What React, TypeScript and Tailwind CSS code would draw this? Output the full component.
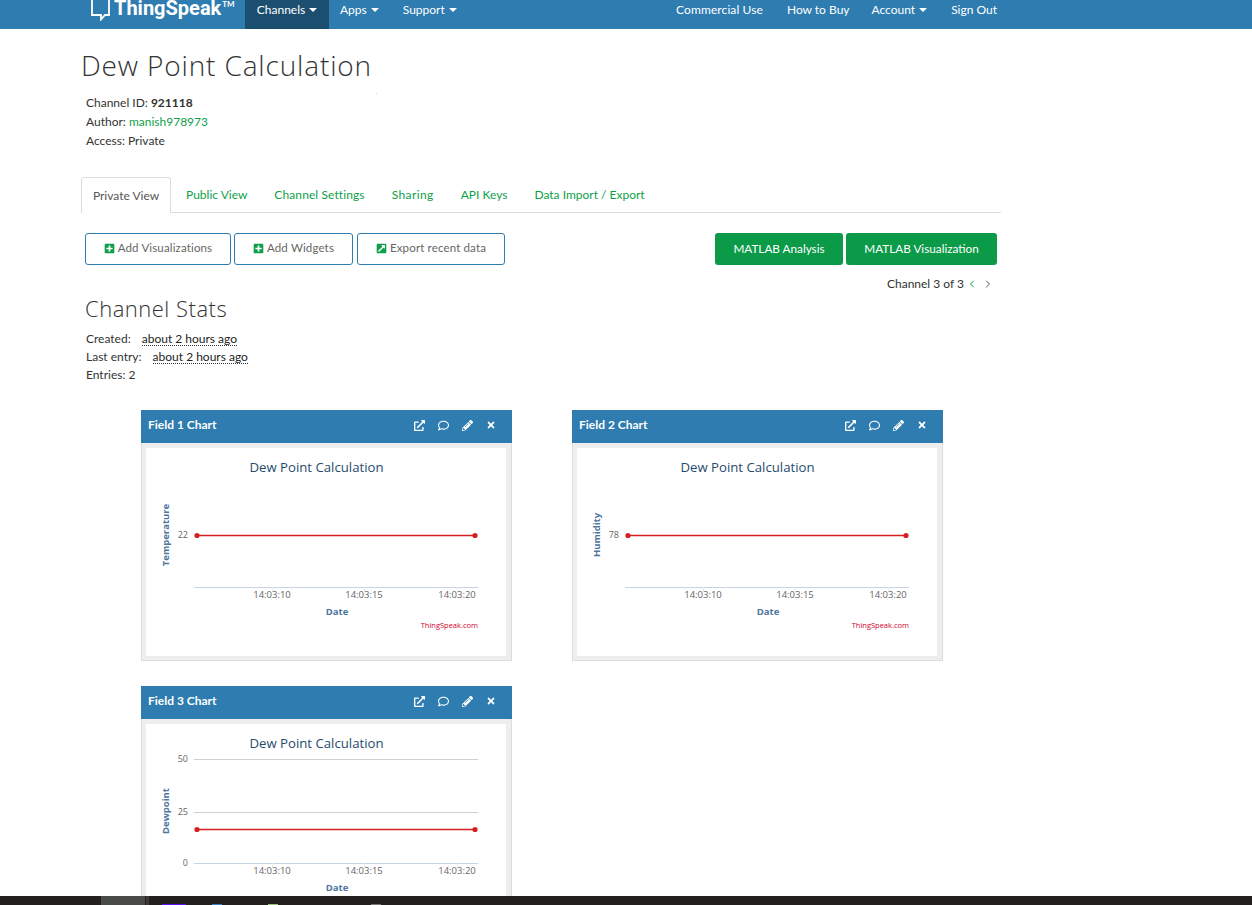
import { ChevronLeft, ChevronRight } from 'lucide-react'
import {
  FaExternalLinkAlt,
  FaExternalLinkSquareAlt,
  FaPencilAlt,
  FaPlusSquare,
  FaRegComment,
  FaTimes,
} from 'react-icons/fa'

type ChartProps = {
  title: string
  yLabel: string
  ticks: { label: string; y: number; grid?: boolean }[]
  lineY: number
}

const BODY = "font-['Lato',sans-serif]"

function Caret() {
  return <span className="ml-1 inline-block border-x-[4px] border-t-[4px] border-x-transparent border-t-white align-middle" />
}

function Chart({ yLabel, ticks, lineY }: Omit<ChartProps, 'title'>) {
  return (
    <svg width="360" height="208" className="block" fontFamily="'Open Sans', sans-serif">
      <text x="170.5" y="24" textAnchor="middle" fontSize="13.2" fill="#274b6d">Dew Point Calculation</text>
      {ticks.map((t) =>
        t.grid ? <line key={t.label} x1="48" x2="332" y1={t.y + 0.5} y2={t.y + 0.5} stroke="#d0d0d0" /> : null,
      )}
      <line x1="48" x2="332" y1="139.5" y2="139.5" stroke="#c8d4e2" />
      {[126, 218, 311].map((x) => (
        <line key={x} x1={x + 0.5} x2={x + 0.5} y1="139" y2="144" stroke="#e4eaf2" />
      ))}
      {ticks.map((t) => (
        <text key={t.label} x="42" y={t.y + 3} textAnchor="end" fontSize="9" fill="#666">{t.label}</text>
      ))}
      {['14:03:10', '14:03:15', '14:03:20'].map((l, i) => (
        <text key={l} x={[126, 218, 311][i]} y="150" textAnchor="middle" fontSize="9.5" fill="#666">{l}</text>
      ))}
      <text
        transform={`translate(23 87) rotate(-90)`}
        textAnchor="middle"
        fontSize="9.5"
        fontWeight="700"
        fill="#4d759e"
      >
        {yLabel}
      </text>
      <text x="191" y="167" textAnchor="middle" fontSize="9.5" fontWeight="700" fill="#4d759e">Date</text>
      <text x="332" y="180" textAnchor="end" fontSize="7.5" fill="#d4002a">ThingSpeak.com</text>
      <line x1="51" x2="329" y1={lineY} y2={lineY} stroke="#d62020" strokeWidth="1.5" />
      <circle cx="51" cy={lineY} r="2.6" fill="#d62020" />
      <circle cx="329" cy={lineY} r="2.6" fill="#d62020" />
    </svg>
  )
}

function ChartPanel({ title, yLabel, ticks, lineY }: ChartProps) {
  return (
    <div className="w-[371px]">
      <div className="flex h-[33px] items-center justify-between bg-[#2e7cb0] pb-[3px] pl-[7px] pr-[16px] text-white">
        <span className="text-[12px] font-bold">{title}</span>
        <div className="flex items-center gap-[13px] text-[11px]">
          <FaExternalLinkAlt />
          <FaRegComment />
          <FaPencilAlt />
          <FaTimes className="text-[10px]" />
        </div>
      </div>
      <div className="h-[218px] border-x border-b border-[#ddd] bg-[#eee] pl-[4px] pt-[5px]">
        <div className="h-[208px] w-[360px] bg-white">
          <Chart yLabel={yLabel} ticks={ticks} lineY={lineY} />
        </div>
      </div>
    </div>
  )
}

function OutlineButton({ width, icon, label }: { width: string; icon: React.ReactNode; label: string }) {
  return (
    <button className={`flex h-[32px] items-center justify-center gap-[3px] rounded-[3px] border border-[#2e7cb0] bg-white pb-[2px] text-[11.5px] tracking-[0.15px] text-[#666] ${width}`}>
      <span className="text-[11px] text-[#0d9f4a]">{icon}</span>
      {label}
    </button>
  )
}

export default function App() {
  return (
    <div className={`relative flex h-[905px] flex-col overflow-hidden bg-white text-[12px] text-[#333] ${BODY}`}>
      <nav className="flex h-[29px] shrink-0 items-stretch overflow-hidden bg-[#2e7cb0] pr-[255px] text-[12px] text-white">
        <div className="ml-[91px] flex w-[154px] items-start">
          <svg width="19" height="21" viewBox="0 0 19 21" className="shrink-0">
            <path d="M1 0V15H10V19.5L14 15H18V0" fill="none" stroke="white" strokeWidth="1.8" />
          </svg>
          <span className="-mt-[4px] ml-[4px] font-['Roboto',sans-serif] text-[20px] font-bold leading-[24px]">ThingSpeak</span>
          <span className="-mt-[1px] ml-px text-[8px] font-bold leading-[10px]">TM</span>
        </div>
        <div className="flex w-[84px] items-center justify-center bg-[#1c4e70] pb-[9px]">Channels<Caret /></div>
        <div className="flex items-center pb-[9px] pl-[11px]">Apps<Caret /></div>
        <div className="flex items-center pb-[9px] pl-[24px]">Support<Caret /></div>
        <div className="ml-auto flex items-center pb-[9px] tracking-[0.1px]">Commercial Use</div>
        <div className="ml-[24px] flex items-center pb-[9px]">How to Buy</div>
        <div className="ml-[22px] flex items-center pb-[9px]">Account<Caret /></div>
        <div className="ml-[24px] flex items-center pb-[9px]">Sign Out</div>
      </nav>

      <div className="absolute left-[376px] top-[93px] h-px w-px bg-gray-300" />

      <main className="min-h-0 flex-1 overflow-hidden pl-[81px]">
        <h1 className="mt-[20px] font-['Open_Sans',sans-serif] text-[28px] font-light leading-[33px] tracking-[0.85px] text-[#333]">Dew Point Calculation</h1>
        <div className="ml-[5px] mt-[11px] leading-[19px]">
          <div>Channel ID: <b>921118</b></div>
          <div>Author: <span className="text-[#0d9f4a]">manish978973</span></div>
          <div>Access: Private</div>
        </div>

        <div className="mt-[27px] flex h-[36px] w-[920px] items-stretch border-b border-[#ddd]">
          <div className="flex h-[36px] w-[90px] items-center justify-center rounded-t-[3px] border border-b-0 border-[#ddd] bg-white pt-px text-[#555]">Private View</div>
          <div className="flex items-center gap-[27px] pl-[15px] pt-px text-[#0d9f4a]">
            <span>Public View</span>
            <span className="tracking-[0.1px]">Channel Settings</span>
            <span className="tracking-[0.4px]">Sharing</span>
            <span>API Keys</span>
            <span>Data Import / Export</span>
          </div>
        </div>

        <div className="ml-[4px] mt-[20px] flex h-[32px] w-[912px] items-stretch">
          <OutlineButton width="w-[146px]" icon={<FaPlusSquare />} label="Add Visualizations" />
          <div className="w-[3px]" />
          <OutlineButton width="w-[119px]" icon={<FaPlusSquare />} label="Add Widgets" />
          <div className="w-[4px]" />
          <OutlineButton width="w-[148px]" icon={<FaExternalLinkSquareAlt />} label="Export recent data" />
          <div className="ml-auto flex gap-[3px] text-[11.75px] text-white">
            <button className="w-[128px] rounded-[3px] bg-[#0a9a48]">MATLAB Analysis</button>
            <button className="w-[151px] rounded-[3px] bg-[#0a9a48]">MATLAB Visualization</button>
          </div>
        </div>

        <div className="mt-[10px] flex w-[913px] items-center justify-end leading-[17px]">
          Channel 3 of 3
          <ChevronLeft size={12} strokeWidth={2} className="ml-[2px] text-[#0d9f4a]" />
          <ChevronRight size={12} strokeWidth={2} className="ml-[4px] text-[#555]" />
        </div>

        <h2 className="ml-[4px] mt-[2px] font-['Open_Sans',sans-serif] text-[22px] font-light leading-[28px] tracking-[0.5px]">Channel Stats</h2>
        <div className="ml-[5px] mt-[8px] leading-[18px]">
          <div>Created: <span className="ml-[8px] inline-block border-b border-dotted border-[#333] leading-[13px] text-[#222]">about 2 hours ago</span></div>
          <div>Last entry: <span className="ml-[8px] inline-block border-b border-dotted border-[#333] leading-[13px] text-[#222]">about 2 hours ago</span></div>
          <div>Entries: 2</div>
        </div>

        <div className="ml-[60px] mt-[26px] grid w-[802px] grid-cols-[371px_371px] gap-x-[60px] gap-y-[25px]">
          <ChartPanel title="Field 1 Chart" yLabel="Temperature" ticks={[{ label: '22', y: 87 }]} lineY={87.5} />
          <ChartPanel title="Field 2 Chart" yLabel="Humidity" ticks={[{ label: '78', y: 87 }]} lineY={87.5} />
          <ChartPanel
            title="Field 3 Chart"
            yLabel="Dewpoint"
            ticks={[
              { label: '50', y: 35, grid: true },
              { label: '25', y: 88, grid: true },
              { label: '0', y: 139 },
            ]}
            lineY={105.5}
          />
        </div>
      </main>

      <footer className="flex h-[9px] shrink-0 items-end bg-[#231f1c]">
        <div className="ml-[101px] h-full w-[44px] bg-[#4a4a48]" />
        <div className="ml-[1px] h-full w-[3px] bg-[#3a3a38]" />
        <div className="ml-[13px] h-px w-[24px] bg-[#5a10f0]" />
        <div className="ml-[26px] h-px w-[10px] bg-[#3a80c0]" />
        <div className="ml-[46px] h-px w-[10px] bg-[#a0c080]" />
        <div className="ml-[93px] h-px w-[10px] bg-[#777]" />
      </footer>
    </div>
  )
}
